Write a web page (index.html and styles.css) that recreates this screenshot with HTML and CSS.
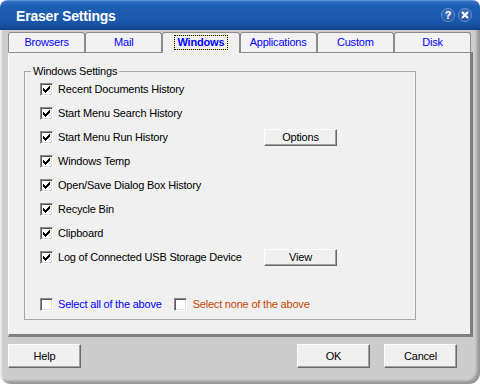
FILE: index.html
```html
<!DOCTYPE html>
<html lang="en">
<head>
    <meta charset="UTF-8">
    <title>Eraser Settings</title>
    <link rel="stylesheet" href="styles.css">
</head>
<body>
    <div class="window">
        <div class="titlebar">
            <span class="title">Eraser Settings</span>
            <div class="caption">
                <span class="cap-btn">?</span>
                <span class="cap-btn">
                    <svg width="8" height="8" viewBox="0 0 8 8"><path d="M1 1L7 7M7 1L1 7" stroke="#fff" stroke-width="2"/></svg>
                </span>
            </div>
        </div>

        <div class="frame">
            <div class="tabs">
                <div class="tab">Browsers</div>
                <div class="tab">Mail</div>
                <div class="tab active"><span class="focus">Windows</span></div>
                <div class="tab">Applications</div>
                <div class="tab">Custom</div>
                <div class="tab">Disk</div>
            </div>

            <div class="panel">
                <fieldset class="group">
                    <legend>Windows Settings</legend>
                    <div class="rows">
                        <div class="row">
                            <label class="check"><span class="box"><svg width="7" height="7" viewBox="0 0 7 7"><path d="M6 0h1v3H6zM5 1h1v3H5zM4 2h1v3H4zM3 3h1v3H3zM2 4h1v3H2zM1 3h1v3H1zM0 2h1v3H0z"/></svg></span>Recent Documents History</label>
                        </div>
                        <div class="row">
                            <label class="check"><span class="box"><svg width="7" height="7" viewBox="0 0 7 7"><path d="M6 0h1v3H6zM5 1h1v3H5zM4 2h1v3H4zM3 3h1v3H3zM2 4h1v3H2zM1 3h1v3H1zM0 2h1v3H0z"/></svg></span>Start Menu Search History</label>
                        </div>
                        <div class="row">
                            <label class="check"><span class="box"><svg width="7" height="7" viewBox="0 0 7 7"><path d="M6 0h1v3H6zM5 1h1v3H5zM4 2h1v3H4zM3 3h1v3H3zM2 4h1v3H2zM1 3h1v3H1zM0 2h1v3H0z"/></svg></span>Start Menu Run History</label>
                            <button class="btn small">Options</button>
                        </div>
                        <div class="row">
                            <label class="check"><span class="box"><svg width="7" height="7" viewBox="0 0 7 7"><path d="M6 0h1v3H6zM5 1h1v3H5zM4 2h1v3H4zM3 3h1v3H3zM2 4h1v3H2zM1 3h1v3H1zM0 2h1v3H0z"/></svg></span>Windows Temp</label>
                        </div>
                        <div class="row">
                            <label class="check"><span class="box"><svg width="7" height="7" viewBox="0 0 7 7"><path d="M6 0h1v3H6zM5 1h1v3H5zM4 2h1v3H4zM3 3h1v3H3zM2 4h1v3H2zM1 3h1v3H1zM0 2h1v3H0z"/></svg></span>Open/Save Dialog Box History</label>
                        </div>
                        <div class="row">
                            <label class="check"><span class="box"><svg width="7" height="7" viewBox="0 0 7 7"><path d="M6 0h1v3H6zM5 1h1v3H5zM4 2h1v3H4zM3 3h1v3H3zM2 4h1v3H2zM1 3h1v3H1zM0 2h1v3H0z"/></svg></span>Recycle Bin</label>
                        </div>
                        <div class="row">
                            <label class="check"><span class="box"><svg width="7" height="7" viewBox="0 0 7 7"><path d="M6 0h1v3H6zM5 1h1v3H5zM4 2h1v3H4zM3 3h1v3H3zM2 4h1v3H2zM1 3h1v3H1zM0 2h1v3H0z"/></svg></span>Clipboard</label>
                        </div>
                        <div class="row">
                            <label class="check"><span class="box"><svg width="7" height="7" viewBox="0 0 7 7"><path d="M6 0h1v3H6zM5 1h1v3H5zM4 2h1v3H4zM3 3h1v3H3zM2 4h1v3H2zM1 3h1v3H1zM0 2h1v3H0z"/></svg></span>Log of Connected USB Storage Device</label>
                            <button class="btn small">View</button>
                        </div>

                        <div class="row select-row">
                            <label class="pick all"><span class="box"></span>Select all of the above</label>
                            <label class="pick none"><span class="box"></span>Select none of the above</label>
                        </div>
                    </div>
                </fieldset>
            </div>

            <div class="footer">
                <button class="btn">Help</button>
                <div class="footer-right">
                    <button class="btn">OK</button>
                    <button class="btn">Cancel</button>
                </div>
            </div>
        </div>
    </div>
</body>
</html>
```

FILE: styles.css
```css
* {
    margin: 0;
    padding: 0;
    box-sizing: border-box;
}

body {
    background-color: #fff;
    font-family: 'Liberation Sans', Arial, sans-serif;
    font-size: 11px;
    letter-spacing: -0.2px;
    color: #000;
}

.window {
    width: 480px;
    height: 384px;
    background-color: #cdcdcd;
    border-radius: 8px 8px 11px 11px;
    overflow: hidden;
    display: flex;
    flex-direction: column;
    box-shadow: inset -3px -3px 3px rgba(0, 0, 0, 0.28), inset 2px 0 1px #ececec;
}

/* Title bar */
.titlebar {
    height: 30px;
    flex: none;
    display: flex;
    align-items: center;
    justify-content: space-between;
    padding: 0 8px 0 16px;
    background: linear-gradient(#6b9ae0 0, #2f6cc2 2px, #1c5eb3 6px, #1a5aad 20px, #16509f 26px, #0f3f84 30px);
}

.title {
    color: #fff;
    font-size: 14px;
    font-weight: bold;
    letter-spacing: -0.2px;
    padding-top: 1px;
}

.caption {
    display: flex;
    gap: 3px;
    padding-bottom: 1px;
}

.cap-btn {
    width: 14px;
    height: 14px;
    border-radius: 50%;
    border: 1px solid #6d96d2;
    background: radial-gradient(circle at 50% 35%, #4a7cc6, #1a4590);
    color: #fff;
    font-size: 11px;
    font-weight: bold;
    display: flex;
    align-items: center;
    justify-content: center;
    letter-spacing: 0;
}

/* Tabs and panel */
.frame {
    padding: 2px 7px 0 8px;
}

.tabs {
    display: flex;
    width: 463px;
    height: 20px;
    position: relative;
    z-index: 1;
}

.tab {
    flex: 1;
    background-color: #f2f2f2;
    border: 1px solid #8c8c8c;
    border-bottom: none;
    border-radius: 3px 3px 0 0;
    color: #0000ff;
    text-align: center;
    line-height: 19px;
}

.tab.active {
    height: 21px;
    background-color: #f0f0f0;
    font-weight: bold;
    display: flex;
    align-items: center;
    justify-content: center;
    padding-bottom: 1px;
}

.focus {
    border: 1px dotted #000;
    padding: 0 3px;
    line-height: 13px;
    background: linear-gradient(#f0f0f0, #f0f0f0) padding-box, #e8e43a border-box;
}

.panel {
    width: 465px;
    height: 285px;
    background-color: #f0f0f0;
    border-top: 1px solid #8e8e8e;
    border-left: 1px solid #fbfbfb;
    border-right: 3px solid #7f7f7f;
    border-bottom: 3px solid #7f7f7f;
    padding: 12px 0 0 15px;
}

.group {
    width: 392px;
    height: 255px;
    border: 1px solid #a6a6a6;
}

.group legend {
    margin-left: 6px;
    padding: 0 2px;
    line-height: 12px;
}

.rows {
    padding-left: 15px;
}

.row {
    height: 24px;
    display: flex;
    align-items: center;
}

.check {
    width: 224px;
    display: flex;
    align-items: center;
    gap: 5px;
}

.box {
    width: 13px;
    height: 13px;
    flex: none;
    background-color: #fff;
    border: 1px solid;
    border-color: #8a8a8a #fff #fff #8a8a8a;
    box-shadow: inset 1px 1px #5a5a5a, inset -1px -1px #dcdcdc;
    display: flex;
    align-items: center;
    justify-content: center;
}

.select-row {
    margin-top: 23px;
}

.pick {
    display: flex;
    align-items: center;
    gap: 5px;
}

.pick.all {
    color: #0000ff;
}

.pick.none {
    color: #c84600;
    margin-left: 12px;
    gap: 6px;
}

/* Buttons */
.btn {
    width: 73px;
    height: 24px;
    background-color: #f0f0f0;
    border: 1px solid;
    border-color: #fdfdfd #6a6a6a #6a6a6a #fdfdfd;
    box-shadow: inset -1px -1px #a2a2a2;
    font-family: inherit;
    font-size: 11px;
    letter-spacing: -0.2px;
    color: #000;
    text-align: center;
}

.btn.small {
    height: 17px;
    line-height: 14px;
}

.footer {
    display: flex;
    justify-content: space-between;
    width: 465px;
    padding-right: 16px;
    margin-top: 7px;
}

.footer-right {
    display: flex;
    gap: 14px;
}
```
